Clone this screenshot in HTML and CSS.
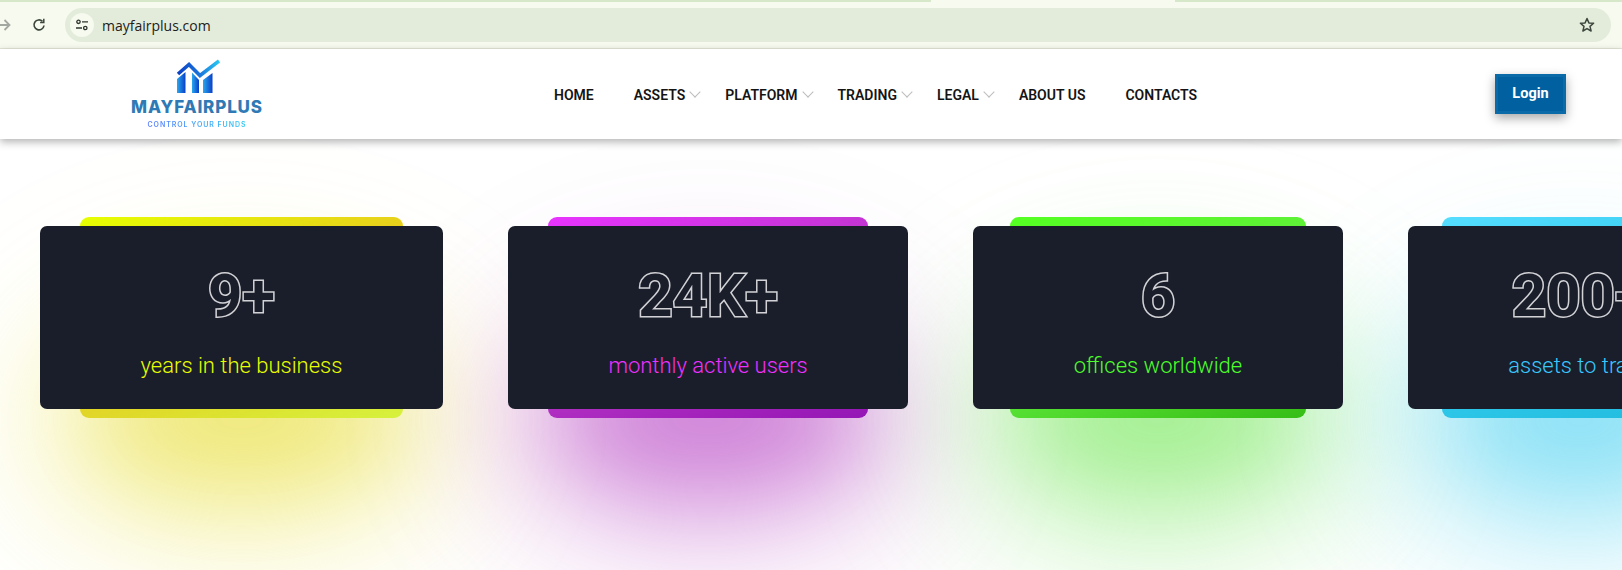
FILE: index.html
```html
<!DOCTYPE html>
<html lang="en">
<head>
    <meta charset="UTF-8">
    <meta name="viewport" content="width=device-width, initial-scale=1.0">
    <title>Mayfairplus</title>
    <link rel="stylesheet" href="styles.css">
</head>
<body>

<!-- Browser toolbar -->
<div class="toolbar">
    <div class="tab-strip">
        <span class="tab-left"></span>
        <span class="tab-right"></span>
    </div>
    <div class="toolbar-row">
        <svg class="tool-forward" width="12" height="14" viewBox="0 0 12 14" fill="none" stroke="#a3a8a1" stroke-width="1.8">
            <path d="M-4 7H9M4.500 2L9.500 7L4.500 12"/>
        </svg>
        <svg class="tool-reload" width="16" height="16" viewBox="0 0 16 16" fill="none" stroke="#3d463c" stroke-width="1.6">
            <path d="M13 8.500A5 5 0 1 1 11.500 4.300"/>
            <path d="M12.800 1.800V5.500H9.100" stroke-width="1.500"/>
        </svg>
        <div class="url-bar">
            <span class="site-info">
                <svg width="14" height="12" viewBox="0 0 14 12" fill="none" stroke="#2f352e" stroke-width="1.300">
                    <circle cx="3.500" cy="2.800" r="1.700"/>
                    <path d="M7 2.800H13M1 9H7"/>
                    <circle cx="10.300" cy="9" r="1.700"/>
                </svg>
            </span>
            <span class="url-text">mayfairplus.com</span>
            <svg class="url-star" width="16" height="16" viewBox="0 0 16 16" fill="none" stroke="#3d463c" stroke-width="1.500" stroke-linejoin="round">
                <path d="M8 1.500L9.900 5.900L14.600 6.300L11 9.400L12.100 14L8 11.600L3.900 14L5 9.400L1.400 6.300L6.100 5.900Z"/>
            </svg>
        </div>
    </div>
</div>

<header class="site-header">
    <a class="logo" href="#">
        <svg class="logo-mark" width="44" height="36" viewBox="0 0 44 36">
            <defs>
                <linearGradient id="logo-bar" x1="0" y1="0" x2="1" y2="0">
                    <stop offset="0" stop-color="#2aa8ee"/>
                    <stop offset="1" stop-color="#0a3fc8"/>
                </linearGradient>
                <linearGradient id="logo-roof" x1="0" y1="0" x2="1" y2="0">
                    <stop offset="0" stop-color="#0b3fc4"/>
                    <stop offset="0.550" stop-color="#1a78dc"/>
                    <stop offset="1" stop-color="#28c8f2"/>
                </linearGradient>
            </defs>
            <path d="M2 16L13 6.500L24 17.500L43 3" fill="none" stroke="url(#logo-roof)" stroke-width="3.600"/>
            <path d="M1 21L9.500 14V35H1Z" fill="url(#logo-bar)"/>
            <path d="M16 14.500L23 22V35H16Z" fill="url(#logo-bar)"/>
            <path d="M27 22L36.500 15V35H27Z" fill="url(#logo-bar)"/>
        </svg>
        <span class="logo-name">MAYFAIRPLUS</span>
        <span class="logo-tag">CONTROL YOUR FUNDS</span>
    </a>

    <nav class="main-nav">
        <a href="#">HOME</a>
        <a href="#" class="has-menu">ASSETS</a>
        <a href="#" class="has-menu">PLATFORM</a>
        <a href="#" class="has-menu">TRADING</a>
        <a href="#" class="has-menu">LEGAL</a>
        <a href="#">ABOUT US</a>
        <a href="#">CONTACTS</a>
    </nav>

    <a class="login-btn" href="#">Login</a>
</header>

<section class="stats">
    <div class="stat stat-yellow">
        <div class="stat-glow"></div>
        <div class="stat-back"></div>
        <div class="stat-body">
            <div class="stat-number">9+</div>
            <div class="stat-label">years in the business</div>
        </div>
    </div>
    <div class="stat stat-purple">
        <div class="stat-glow"></div>
        <div class="stat-back"></div>
        <div class="stat-body">
            <div class="stat-number">24K+</div>
            <div class="stat-label">monthly active users</div>
        </div>
    </div>
    <div class="stat stat-green">
        <div class="stat-glow"></div>
        <div class="stat-back"></div>
        <div class="stat-body">
            <div class="stat-number">6</div>
            <div class="stat-label">offices worldwide</div>
        </div>
    </div>
    <div class="stat stat-blue">
        <div class="stat-glow"></div>
        <div class="stat-back"></div>
        <div class="stat-body">
            <div class="stat-number">200+</div>
            <div class="stat-label">assets to trade</div>
        </div>
    </div>
</section>

</body>
</html>
```

FILE: styles.css
```css
:root {
    --dark-card: #1a1e2a;
    --toolbar-bg: #f6faef;
    --url-bg: #e3ecdb;
    --tab-bg: #d6e7ca;
}
body {
    font-family: 'Roboto', Arial, sans-serif;
    margin: 0;
    padding: 0;
    width: 1622px;
    height: 570px;
    overflow: hidden;
    background-color: #fff;
}
a {
    text-decoration: none;
    color: inherit;
}

/* browser toolbar */
.toolbar {
    height: 48px;
    background-color: var(--toolbar-bg);
    border-bottom: 1px solid #e1e6d6;
}
.tab-strip {
    display: flex;
    justify-content: space-between;
    height: 2px;
}
.tab-left,
.tab-right {
    background-color: var(--tab-bg);
    height: 2px;
}
.tab-left {
    width: 931px;
}
.tab-right {
    width: 447px;
}
.toolbar-row {
    display: flex;
    align-items: center;
    height: 34px;
    margin-top: 6px;
    padding-right: 11px;
}
.tool-forward {
    flex: none;
    overflow: visible;
}
.tool-reload {
    flex: none;
    margin-left: 19px;
}
.url-bar {
    flex: 1;
    display: flex;
    align-items: center;
    height: 34px;
    margin-left: 18px;
    padding: 0 16px 0 5px;
    border-radius: 17px;
    background-color: var(--url-bg);
}
.site-info {
    display: flex;
    align-items: center;
    justify-content: center;
    width: 24px;
    height: 24px;
    border-radius: 50%;
    background-color: var(--toolbar-bg);
}
.url-text {
    margin-left: 8px;
    font-family: 'Open Sans', Arial, sans-serif;
    font-size: 14px;
    color: #1d211c;
}
.url-star {
    margin-left: auto;
}

/* site header */
.site-header {
    position: relative;
    z-index: 2;
    display: flex;
    align-items: center;
    height: 90px;
    padding: 0 56px 0 131px;
    background-color: #fff;
    box-shadow: 0 3px 8px rgba(0, 0, 0, 0.3);
}
.logo {
    display: flex;
    flex-direction: column;
    align-items: center;
    width: 132px;
    margin-top: -1px;
}
.logo-mark {
    display: block;
    margin-left: 2px;
}
.logo-name {
    margin-top: 5px;
    font-family: 'Inter', Arial, sans-serif;
    font-size: 17px;
    line-height: 17px;
    font-weight: 800;
    letter-spacing: 0.85px;
    color: #2f7ab5;
    white-space: nowrap;
}
.logo-tag {
    margin-top: 4px;
    font-family: 'Inter', Arial, sans-serif;
    font-size: 7px;
    line-height: 9px;
    font-weight: 600;
    letter-spacing: 0.95px;
    white-space: nowrap;
    background: linear-gradient(90deg, #5a7cff, #2fc8f0);
    -webkit-background-clip: text;
    background-clip: text;
    color: transparent;
}
.main-nav {
    display: flex;
    margin-left: 291px;
    margin-top: 2px;
    gap: 40px;
    font-size: 14px;
    font-weight: 600;
    color: #141414;
    white-space: nowrap;
}
.has-menu {
    position: relative;
}
/* thin chevron after the dropdown items */
.has-menu::after {
    content: "";
    position: absolute;
    right: -14px;
    top: 1px;
    width: 7px;
    height: 7px;
    border-right: 1px solid #bdbdbd;
    border-bottom: 1px solid #bdbdbd;
    transform: rotate(45deg);
}
.login-btn {
    margin-left: auto;
    width: 65px;
    height: 34px;
    line-height: 34px;
    text-align: center;
    font-size: 14.500px;
    font-weight: 700;
    color: #fff;
    background-color: #01609f;
    border: 3px solid #0a6ba8;
    box-shadow: 0 4px 10px rgba(0, 0, 0, 0.35);
}

/* stat cards */
.stats {
    position: relative;
    z-index: 1;
    isolation: isolate;
    display: flex;
    gap: 65px;
    padding: 87px 0 0 40px;
}
.stat {
    position: relative;
    flex: none;
}
.stat-yellow {
    --accent: #e8ff00;
    --glow: rgba(228, 216, 30, 0.6);
    --glow-far: rgba(232, 225, 60, 0.28);
    --back: linear-gradient(160deg, #e6ff00, #e8c820 45%, #e0d828 65%, #d6f23c);
}
.stat-purple {
    --accent: #f030ff;
    --glow: rgba(176, 50, 190, 0.62);
    --glow-far: rgba(176, 60, 190, 0.26);
    --back: linear-gradient(160deg, #e834ff, #b835c5 50%, #9416b5);
}
.stat-green {
    --accent: #4dff2a;
    --glow: rgba(110, 230, 80, 0.64);
    --glow-far: rgba(110, 230, 90, 0.3);
    --back: linear-gradient(160deg, #55ff22, #62ec3e 50%, #36bd16);
}
.stat-blue {
    --accent: #38c8ff;
    --glow: rgba(60, 205, 240, 0.6);
    --glow-far: rgba(60, 205, 240, 0.3);
    --back: linear-gradient(160deg, #55ddff, #30cbec 50%, #20bade);
}
.stat-glow {
    position: absolute;
    z-index: -2;
    left: 10%;
    right: 10%;
    top: 65%;
    height: 150px;
    border-radius: 50%;
    background-color: var(--glow);
    box-shadow: 0 0 100px 60px var(--glow-far);
    filter: blur(50px);
}
.stat-back {
    position: absolute;
    z-index: -1;
    left: 10%;
    right: 10%;
    top: -9px;
    bottom: -9px;
    border-radius: 9px;
    background: var(--back);
}
.stat-body {
    box-sizing: border-box;
    height: 183px;
    padding: 33px 100.500px 0;
    border-radius: 7px;
    background-color: var(--dark-card);
    text-align: center;
}
.stat-number {
    font-size: 60px;
    line-height: 74px;
    font-weight: 700;
    color: var(--dark-card);
    -webkit-text-stroke: 3px #d2d2d6;
    paint-order: stroke fill;
}
.stat-label {
    margin-top: 18px;
    font-size: 22px;
    line-height: 30px;
    font-weight: 300;
    color: var(--accent);
    white-space: nowrap;
}
```
